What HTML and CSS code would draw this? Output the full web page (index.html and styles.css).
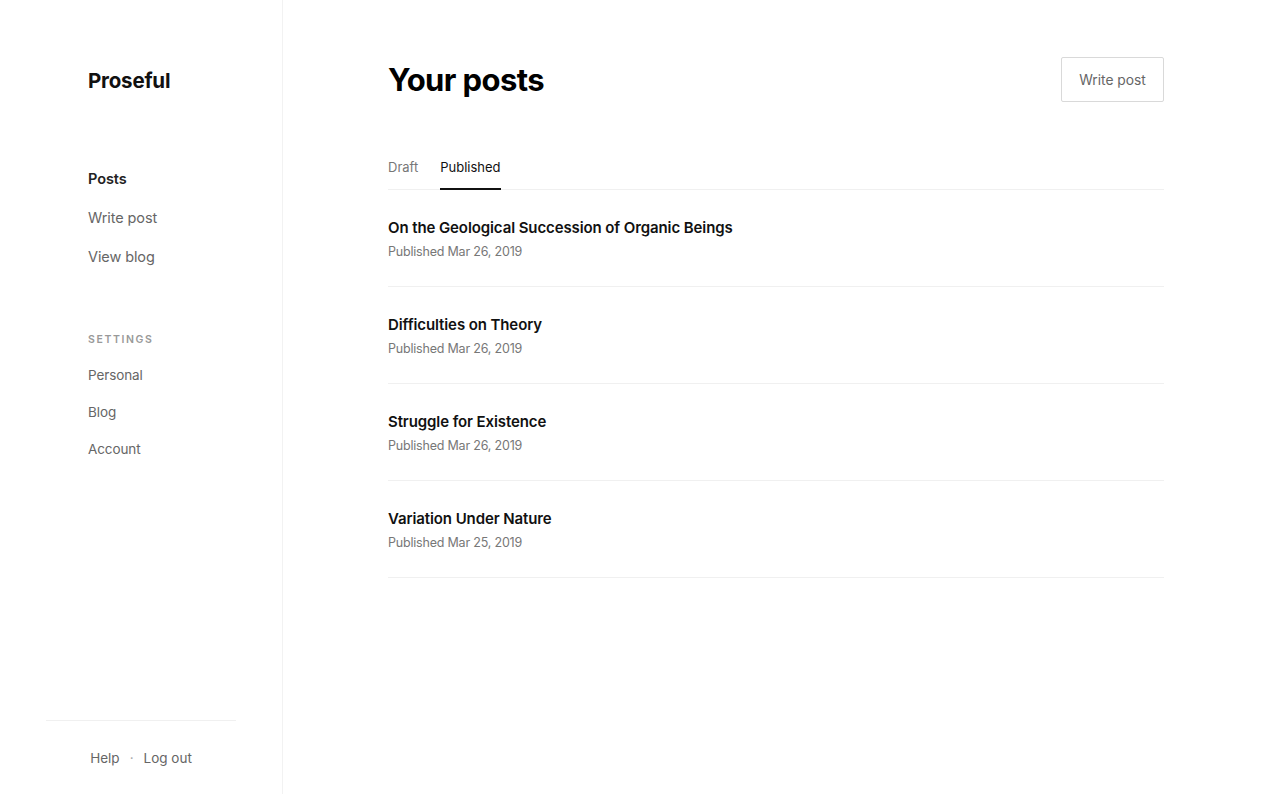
FILE: index.html
```html
<!DOCTYPE html>
<html lang="en">
<head>
<meta charset="utf-8">
<title>Your posts – Proseful</title>
<link rel="stylesheet" href="styles.css">
</head>
<body>
<div class="app">
  <aside class="sidebar">
    <div class="brand">Proseful</div>
    <nav class="nav">
      <a class="nav-link active" href="#">Posts</a>
      <a class="nav-link" href="#">Write post</a>
      <a class="nav-link" href="#">View blog</a>
    </nav>
    <div class="settings">
      <div class="settings-title">Settings</div>
      <a class="set-link" href="#">Personal</a>
      <a class="set-link" href="#">Blog</a>
      <a class="set-link" href="#">Account</a>
    </div>
    <footer class="side-footer">
      <a href="#">Help</a><span class="dot">·</span><a href="#">Log out</a>
    </footer>
  </aside>
  <main class="main">
    <header class="header">
      <h1 class="title">Your posts</h1>
      <button class="btn">Write post</button>
    </header>
    <div class="tabs">
      <a class="tab" href="#">Draft</a>
      <a class="tab active" href="#">Published</a>
    </div>
    <ul class="posts">
      <li class="post"><div class="post-title">On the Geological Succession of Organic Beings</div><div class="post-date">Published Mar 26, 2019</div></li>
      <li class="post"><div class="post-title">Difficulties on Theory</div><div class="post-date">Published Mar 26, 2019</div></li>
      <li class="post"><div class="post-title">Struggle for Existence</div><div class="post-date">Published Mar 26, 2019</div></li>
      <li class="post"><div class="post-title">Variation Under Nature</div><div class="post-date">Published Mar 25, 2019</div></li>
    </ul>
  </main>
</div>
</body>
</html>
```
FILE: styles.css
```css
* { box-sizing: border-box; }
html, body { margin: 0; padding: 0; background: #fff; }
body { font-family: Inter, "Liberation Sans", Arial, sans-serif; color: #111; -webkit-font-smoothing: antialiased; }
a { text-decoration: none; color: inherit; }

.app { display: flex; height: 794px; }

.sidebar {
  width: 283px;
  flex: none;
  border-right: 1px solid #f2f2f2;
  padding: 66px 46px 0;
  display: flex;
  flex-direction: column;
}
.brand { font-size: 20.5px; font-weight: 700; line-height: 30px; padding-left: 42px; color: #111; letter-spacing: -0.2px; }
.nav { margin-top: 62.5px; padding-left: 42px; display: flex; flex-direction: column; }
.nav-link { display: block; font-size: 14.5px; line-height: 39px; color: #666; letter-spacing: -0.1px; }
.nav-link.active { color: #222; font-weight: 600; }
.settings { margin-top: 54.5px; padding-left: 42px; display: flex; flex-direction: column; }
.settings-title { font-size: 10.5px; font-weight: 600; line-height: 20px; letter-spacing: 1.6px; text-transform: uppercase; color: #999; margin-bottom: 6.5px; }
.set-link { display: block; font-size: 13.5px; line-height: 37px; color: #666; letter-spacing: -0.1px; }
.side-footer {
  margin-top: auto;
  border-top: 1px solid #f0f0f0;
  padding: 27px 0 26px;
  display: flex;
  justify-content: center;
  font-size: 13.5px;
  line-height: 20px;
  color: #666;
}
.dot { margin: 0 10px; color: #aaa; }

.main { flex: 1; padding: 0 106px 0 105px; }
.header { margin-top: 57px; height: 45px; display: flex; align-items: center; justify-content: space-between; }
.title { margin: 0; font-size: 31px; font-weight: 700; color: #000; letter-spacing: -0.6px; line-height: 40px; }
.btn {
  height: 45px;
  width: 103px;
  background: #fff;
  border: 1px solid #d9d9d9;
  border-radius: 2px;
  font-family: inherit;
  font-size: 13.8px;
  color: #666;
  padding: 0;
}

.tabs { margin-top: 55px; display: flex; gap: 22px; border-bottom: 1px solid #f0f0f0; }
.tab { font-size: 13px; line-height: 20px; padding-bottom: 11px; color: #777; margin-bottom: -1px; border-bottom: 2px solid transparent; }
.tab.active { color: #111; border-bottom-color: #111; }

.posts { list-style: none; margin: 0; padding: 0; }
.post { padding: 27px 0 24px; border-bottom: 1px solid #f0f0f0; }
.post-title { font-size: 15px; font-weight: 600; line-height: 22px; color: #111; letter-spacing: -0.1px; }
.post-date { margin-top: 3px; font-size: 12.5px; line-height: 20px; color: #777; letter-spacing: -0.2px; }
```
